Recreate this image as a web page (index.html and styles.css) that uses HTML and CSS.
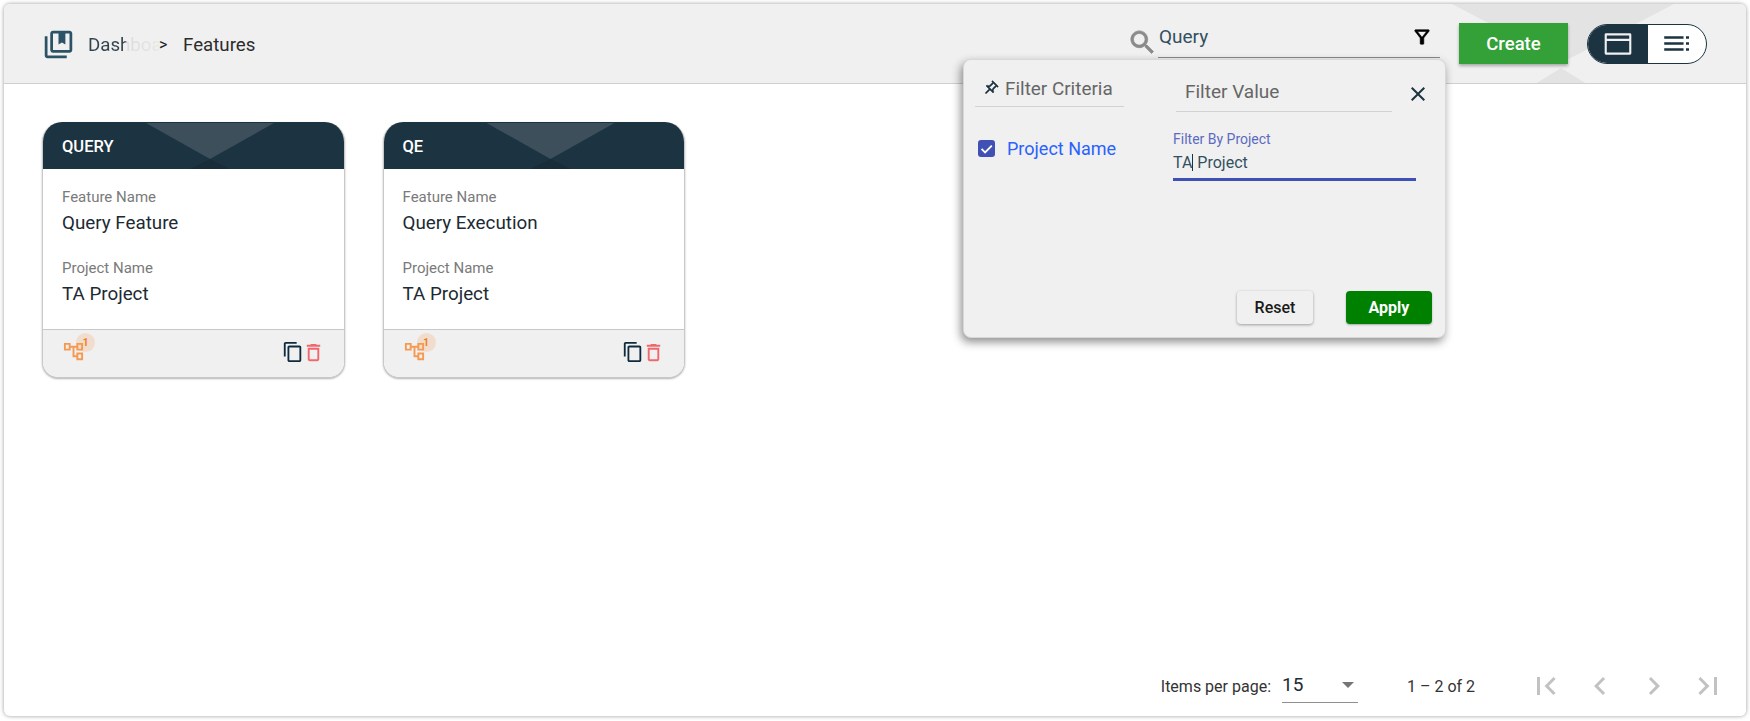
FILE: index.html
```html
<!DOCTYPE html>
<html lang="en">
<head>
<meta charset="utf-8">
<title>Features</title>
<link rel="stylesheet" href="styles.css">
</head>
<body>
<div class="frame">
  <header class="topbar">
    <div class="deco-top"></div>
    <div class="deco-bottom"></div>
    <svg class="crumb-icon" viewBox="0 0 24 24"><path d="M4 6H2v14c0 1.1.9 2 2 2h14v-2H4V6zm16-4H8c-1.100 0-2 .9-2 2v12c0 1.100.9 2 2 2h12c1.100 0 2-.9 2-2V4c0-1.100-.9-2-2-2zm0 14H8V4h4v8l2.500-1.500L17 12V4h3v12z"/></svg>
    <nav class="crumbs">
      <span class="crumb-fade">Dashboard</span>
      <span class="crumb-sep">&gt;</span>
      <span class="crumb-current">Features</span>
    </nav>
    <div class="spacer"></div>
    <svg class="search-icon" viewBox="0 0 24 24"><path d="M15.500 14h-.79l-.28-.27C15.410 12.590 16 11.110 16 9.500 16 5.910 13.090 3 9.500 3S3 5.910 3 9.500 5.910 16 9.500 16c1.610 0 3.090-.59 4.230-1.570l.27.28v.79l5 4.990L20.490 19l-4.990-5zm-6 0C7.010 14 5 11.990 5 9.500S7.010 5 9.500 5 14 7.010 14 9.500 11.990 14 9.500 14z"/></svg>
    <div class="search-box">
      <span class="search-text">Query</span>
      <svg class="filter-icon" viewBox="0 0 24 24"><path d="M7 6h10l-5.010 6.300L7 6zm-2.750-.39C6.270 8.200 10 13 10 13v6c0 .55.45 1 1 1h2c.55 0 1-.45 1-1v-6s3.720-4.800 5.740-7.390c.51-.66.04-1.610-.79-1.610H5.040c-.83 0-1.300.95-.79 1.610z"/></svg>
    </div>
    <button class="create-btn">Create</button>
    <div class="view-toggle">
      <span class="view-card">
        <svg class="view-svg" viewBox="0 0 24 24"><path d="M3 4h18a1 1 0 0 1 1 1v14a1 1 0 0 1-1 1H3a1 1 0 0 1-1-1V5a1 1 0 0 1 1-1zm.6 5.800v8.600h16.800V9.800zm0-4.200v2.400h16.800V5.600z"/></svg>
      </span>
      <span class="view-list">
        <svg class="view-svg" viewBox="0 0 24 24"><path d="M1 6h16v2H1zM1 11h16v2H1zM1 16h16v2H1zM19 6h2.500v2H19zM19 11h2.500v2H19zM19 16h2.500v2H19z"/></svg>
      </span>
    </div>
  </header>

  <section class="popup">
    <div class="popup-cols">
      <div class="criteria">
        <div class="criteria-head">
          <svg class="pin-icon" viewBox="0 0 24 24"><path d="M14 4v5c0 1.120.37 2.160 1 3H9c.65-.86 1-1.900 1-3V4h4m3-2H7c-.55 0-1 .45-1 1s.45 1 1 1h1v5c0 1.660-1.340 3-3 3v2h5.970v7l1 1 1-1v-7H19v-2c-1.660 0-3-1.340-3-3V4h1c.55 0 1-.45 1-1s-.45-1-1-1z"/></svg>
          <span>Filter Criteria</span>
        </div>
        <div class="criteria-row">
          <span class="checkbox">
            <svg viewBox="0 0 24 24"><path d="M5 12.500l5 5L19.500 8" fill="none" stroke="#fff" stroke-width="2.600"/></svg>
          </span>
          <span class="criteria-name">Project Name</span>
        </div>
      </div>
      <div class="values">
        <div class="values-head">
          <span class="values-title">Filter Value</span>
          <svg class="close-icon" viewBox="0 0 24 24"><path d="M19 6.410L17.590 5 12 10.590 6.410 5 5 6.410 10.590 12 5 17.590 6.410 19 12 13.410 17.590 19 19 17.590 13.410 12z"/></svg>
        </div>
        <div class="field">
          <div class="field-label">Filter By Project</div>
          <div class="field-value">TA<span class="caret"></span> Project</div>
        </div>
      </div>
    </div>
    <div class="popup-actions">
      <button class="reset-btn">Reset</button>
      <button class="apply-btn">Apply</button>
    </div>
  </section>

  <main class="content">
    <article class="card">
      <div class="card-head"><span class="card-tri"></span><span class="card-title">QUERY</span></div>
      <div class="card-body">
        <div class="card-label">Feature Name</div>
        <div class="card-value">Query Feature</div>
        <div class="card-label second">Project Name</div>
        <div class="card-value">TA Project</div>
      </div>
      <div class="card-foot">
        <span class="tree">
          <svg class="tree-icon" viewBox="0 0 24 24"><path d="M22 11V3h-7v3H9V3H2v8h7V8h2v10h4v3h7v-8h-7v3h-2V8h2v3h7zM7 9H4V5h3v4zm10 6h3v4h-3v-4zm0-10h3v4h-3V5z"/></svg>
          <span class="tree-badge">1</span>
        </span>
        <span class="spacer"></span>
        <svg class="copy-icon" viewBox="0 0 24 24"><path d="M16 1H4c-1.100 0-2 .9-2 2v14h2V3h12V1zm3 4H8c-1.100 0-2 .9-2 2v14c0 1.100.9 2 2 2h11c1.100 0 2-.9 2-2V7c0-1.100-.9-2-2-2zm0 16H8V7h11v14z"/></svg>
        <svg class="trash-icon" viewBox="0 0 24 24"><path d="M16 9v10H8V9h8m-1.500-6h-5l-1 1H5v2h14V4h-3.500l-1-1zM18 7H6v12c0 1.100.9 2 2 2h8c1.100 0 2-.9 2-2V7z"/></svg>
      </div>
    </article>
    <article class="card">
      <div class="card-head"><span class="card-tri"></span><span class="card-title">QE</span></div>
      <div class="card-body">
        <div class="card-label">Feature Name</div>
        <div class="card-value">Query Execution</div>
        <div class="card-label second">Project Name</div>
        <div class="card-value">TA Project</div>
      </div>
      <div class="card-foot">
        <span class="tree">
          <svg class="tree-icon" viewBox="0 0 24 24"><path d="M22 11V3h-7v3H9V3H2v8h7V8h2v10h4v3h7v-8h-7v3h-2V8h2v3h7zM7 9H4V5h3v4zm10 6h3v4h-3v-4zm0-10h3v4h-3V5z"/></svg>
          <span class="tree-badge">1</span>
        </span>
        <span class="spacer"></span>
        <svg class="copy-icon" viewBox="0 0 24 24"><path d="M16 1H4c-1.100 0-2 .9-2 2v14h2V3h12V1zm3 4H8c-1.100 0-2 .9-2 2v14c0 1.100.9 2 2 2h11c1.100 0 2-.9 2-2V7c0-1.100-.9-2-2-2zm0 16H8V7h11v14z"/></svg>
        <svg class="trash-icon" viewBox="0 0 24 24"><path d="M16 9v10H8V9h8m-1.500-6h-5l-1 1H5v2h14V4h-3.500l-1-1zM18 7H6v12c0 1.100.9 2 2 2h8c1.100 0 2-.9 2-2V7z"/></svg>
      </div>
    </article>
  </main>

  <footer class="pager">
    <span class="pager-label">Items per page:</span>
    <span class="pager-select"><span class="pager-size">15</span><span class="pager-arrow"></span></span>
    <span class="pager-range">1 – 2 of 2</span>
    <svg class="pager-icon" viewBox="0 0 24 24"><path d="M18.410 16.590L13.820 12l4.590-4.590L17 6l-6 6 6 6zM6 6h2v12H6z"/></svg>
    <svg class="pager-icon" viewBox="0 0 24 24"><path d="M15.410 7.410L14 6l-6 6 6 6 1.410-1.410L10.830 12z"/></svg>
    <svg class="pager-icon" viewBox="0 0 24 24"><path d="M10 6L8.590 7.410 13.170 12l-4.580 4.590L10 18l6-6z"/></svg>
    <svg class="pager-icon" viewBox="0 0 24 24"><path d="M5.590 7.410L10.180 12l-4.590 4.590L7 18l6-6-6-6zM16 6h2v12h-2z"/></svg>
  </footer>
</div>
</body>
</html>
```

FILE: styles.css
```css
* { box-sizing: border-box; }
html, body { margin: 0; padding: 0; background: #fff; overflow: hidden; }
body { font-family: Roboto, "Liberation Sans", sans-serif; color: #1c3341; }
button { font-family: inherit; border: 0; cursor: pointer; }
.frame {
  position: relative;
  width: 1742px;
  height: 712px;
  margin: 4px;
  display: flex;
  flex-direction: column;
  background: #fff;
  border-radius: 6px;
  box-shadow: 0 0 4px rgba(0, 0, 0, .4);
  overflow: hidden;
}
.spacer { flex: 1; }
.topbar {
  position: relative;
  z-index: 0;
  height: 80px;
  flex: none;
  display: flex;
  align-items: center;
  padding: 0 39px 0 38px;
  background: #f0f0f0;
  border-bottom: 1px solid #cfcfcf;
  overflow: hidden;
}
.deco-top {
  position: absolute;
  z-index: -1;
  left: 1448px;
  top: 0;
  width: 222px;
  height: 58px;
  background: #e3e3e3;
  clip-path: polygon(0 0, 100% 0, 50% 100%);
}
.deco-bottom {
  position: absolute;
  z-index: -1;
  left: 1531px;
  top: 64px;
  width: 52px;
  height: 16px;
  background: #e3e3e3;
  clip-path: polygon(50% 0, 100% 100%, 0 100%);
}
.crumb-icon { width: 33px; height: 33px; fill: #2b5266; flex: none; margin-top: 1px; }
.crumbs { display: flex; align-items: center; margin: 2px 0 0 13px; font-size: 18.700px; }
.crumb-fade {
  width: 71px;
  white-space: nowrap;
  background: linear-gradient(90deg, #33424c 0, #33424c 37px, #dcdcdc 39px, #e4e4e4 66px, #f0f0f0 80px);
  -webkit-background-clip: text;
  background-clip: text;
  color: transparent;
}
.crumb-sep { font-size: 16px; color: #222; width: 24px; }
.crumb-current { color: #2c2c2c; }
.search-icon { width: 31px; height: 31px; fill: #8a8a8a; stroke: #8a8a8a; stroke-width: .6; flex: none; margin-top: -3px; }
.search-box {
  width: 282px;
  height: 37px;
  display: flex;
  justify-content: space-between;
  align-items: flex-start;
  padding: 0 7px 0 1px;
  border-bottom: 1px solid #8a8a8a;
  margin-right: 19px;
  margin-top: -9px;
}
.search-text { font-size: 19px; line-height: 24px; margin-top: 4px; color: #33505f; }
.filter-icon { width: 22px; height: 22px; fill: #000; margin-top: 5px; stroke: #000; stroke-width: .6; }
.create-btn {
  width: 109px;
  height: 41px;
  background: #33a137;
  color: #fff;
  font-size: 18.500px;
  font-weight: 500;
  margin-right: 19px;
  box-shadow: 0 2px 3px rgba(0, 0, 0, .3);
}
.view-toggle {
  width: 120px;
  height: 40px;
  display: flex;
  border: 1px solid #1c3341;
  border-radius: 20px;
  overflow: hidden;
  background: #fff;
}
.view-card { width: 60px; background: #1c3341; display: flex; align-items: center; justify-content: center; }
.view-card .view-svg { width: 32px; height: 32px; fill: #f0f0f0; }
.view-list { flex: 1; display: flex; align-items: center; justify-content: center; }
.view-list .view-svg { width: 29px; height: 29px; fill: #1c3341; }

.popup {
  position: absolute;
  z-index: 5;
  left: 959px;
  top: 55px;
  width: 483px;
  height: 279px;
  display: flex;
  flex-direction: column;
  background: #f0f0f0;
  border: 1px solid #d8d8d8;
  border-radius: 8px;
  box-shadow: -2px 4px 10px rgba(0, 0, 0, .45);
}
.popup-cols { display: flex; flex: 1; }
.criteria { width: 209px; padding: 0 0 0 11px; }
.criteria-head {
  width: 149px;
  height: 47px;
  padding: 11px 0 0 7px;
  display: flex;
  align-items: center;
  gap: 6px;
  border-bottom: 1px solid #d2d2d2;
  font-size: 18.900px;
  color: #666;
}
.pin-icon { width: 17px; height: 17px; fill: #1c3341; transform: rotate(45deg); flex: none; stroke: #1c3341; stroke-width: .6; }
.criteria-row { display: flex; align-items: center; gap: 12px; margin-top: 31px; padding-left: 3px; }
.checkbox { width: 17px; height: 17px; background: #3f51b5; border-radius: 3px; display: flex; }
.checkbox svg { width: 17px; height: 17px; }
.criteria-name { font-size: 18px; color: #2962ff; }
.values { flex: 1; }
.values-head {
  position: relative;
  width: 216px;
  height: 52px;
  margin-left: 3px;
  padding: 20px 0 0 9px;
  border-bottom: 1px solid #d2d2d2;
  font-size: 19px;
  color: #666;
}
.close-icon { position: absolute; left: 230px; top: 22px; width: 24px; height: 24px; fill: #1c3341; }
.field { width: 243px; margin-top: 18px; border-bottom: 3px solid #3f51b5; height: 51px; }
.field-label { font-size: 14px; line-height: 18px; color: #5c6bc0; }
.field-value { font-size: 16px; line-height: 24px; margin-top: 3px; color: #33505f; white-space: pre; }
.caret { display: inline-block; width: 1px; height: 17px; background: #1c3341; vertical-align: -3px; }
.popup-actions { display: flex; justify-content: flex-end; gap: 33px; padding: 0 13px 13px 0; }
.reset-btn, .apply-btn { height: 33px; border-radius: 4px; font-size: 16px; font-weight: 500; }
.reset-btn { width: 76px; background: #f0f0f0; color: #1a1a1a; box-shadow: 0 1px 3px rgba(0, 0, 0, .35); }
.apply-btn { width: 86px; background: #008000; color: #fff; font-weight: 700; box-shadow: 0 1px 2px rgba(0, 0, 0, .3); }

.content { flex: 1; display: flex; align-items: flex-start; gap: 38px; padding: 38px 0 0 38px; }
.card {
  width: 302.500px;
  height: 256px;
  display: flex;
  flex-direction: column;
  background: #fff;
  border: 1px solid #c8c8c8;
  border-top: 0;
  border-radius: 20px 20px 16px 16px;
  box-shadow: 0 1px 2px rgba(0, 0, 0, .3);
  overflow: hidden;
}
.card-head {
  position: relative;
  height: 47px;
  flex: none;
  margin: 0 -1px;
  background: #1c3341;
  padding: 15px 0 0 20px;
  overflow: hidden;
}
.card-head::before {
  content: "";
  position: absolute;
  left: 104px;
  top: 1px;
  width: 128px;
  height: 36px;
  background: #3c4f5b;
  clip-path: polygon(0 0, 100% 0, 50% 100%);
}
.card-tri {
  position: absolute;
  left: 148px;
  top: 37px;
  width: 40px;
  height: 10px;
  background: #192d39;
  clip-path: polygon(50% 0, 100% 100%, 0 100%);
}
.card-title { position: relative; color: #fff; font-size: 16.500px; font-weight: 500; line-height: 20px; }
.card-body { flex: 1; padding: 18px 0 0 19px; }
.card-label { font-size: 15px; line-height: 20px; color: #7a7a7a; }
.card-label.second { margin-top: 23px; }
.card-value { font-size: 18.800px; line-height: 24px; margin-top: 4px; color: #1c2a33; }
.card-foot {
  height: 48px;
  flex: none;
  display: flex;
  align-items: flex-start;
  padding: 11px 19px 0 19px;
  background: #f0f0f0;
  border-top: 1px solid #c8c8c8;
}
.tree { position: relative; display: block; width: 23px; height: 23px; margin-top: -1px; }
.tree-icon { width: 23px; height: 23px; fill: #f59a52; }
.tree-badge {
  position: absolute;
  left: 14px;
  top: -7px;
  width: 19px;
  height: 19px;
  border-radius: 50%;
  background: rgba(245, 154, 82, .22);
  color: #ef7d22;
  font-size: 10px;
  line-height: 19px;
  font-weight: 700;
  text-align: center;
}
.copy-icon { width: 22px; height: 22px; fill: #0f2a3d; }
.trash-icon { width: 23px; height: 23px; fill: #f0686c; margin-left: -2px; }

.pager {
  position: absolute;
  right: 0;
  bottom: 0;
  height: 55px;
  display: flex;
  align-items: center;
  padding: 0 20px 5px 0;
  font-size: 16px;
  color: #333;
  background: #fff;
}
.pager-label { margin-right: 11px; }
.pager-select {
  width: 76px;
  height: 34px;
  display: flex;
  justify-content: space-between;
  align-items: center;
  border-bottom: 1px solid #8f8f8f;
  margin-right: 49px;
  padding: 0 4px 2px 0;
}
.pager-size { font-size: 19px; color: #1c2a33; }
.pager-arrow { width: 0; height: 0; border: 6.500px solid transparent; border-top-color: #757575; border-bottom: 0; }
.pager-range { margin-right: 53px; width: 68px; white-space: nowrap; }
.pager-icon { width: 36px; height: 36px; fill: #c2c2c2; margin-right: 18px; }
.pager-icon:last-child { margin-right: 0; }
```
